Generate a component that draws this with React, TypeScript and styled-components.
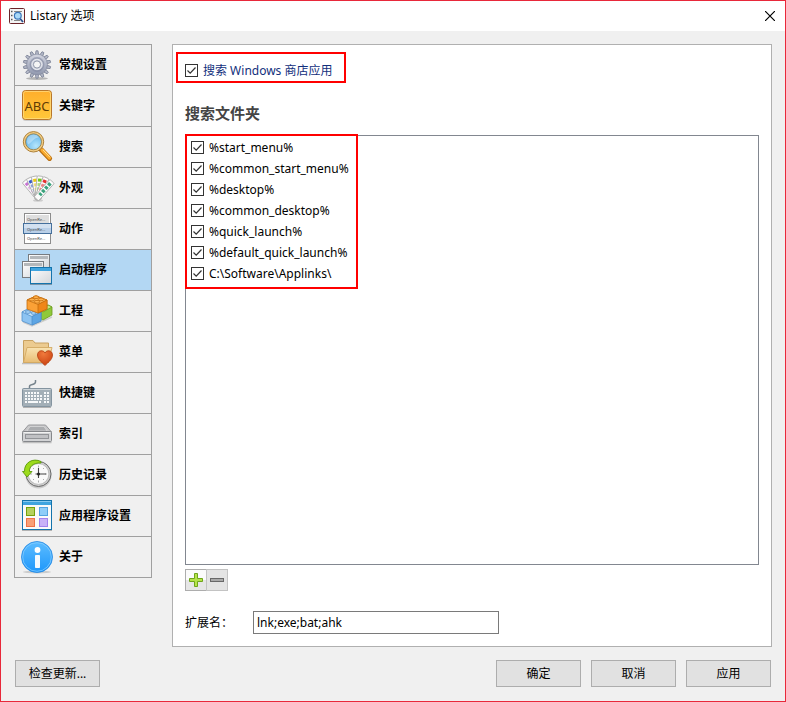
import React, { useState } from 'react';
import styled, { createGlobalStyle } from 'styled-components';

const GlobalStyle = createGlobalStyle`
  *, *::before, *::after { box-sizing: border-box; }
  body {
    margin: 0;
    font: 12px/16px "Noto Sans", "Noto Sans CJK SC", sans-serif;
    color: #000;
  }
  button, input { font: inherit; color: inherit; }
`;

const Window = styled.main`
  display: flex;
  flex-direction: column;
  min-height: 100vh;
  border: 1px solid #e8283a;
  background: #f0f0f0;
`;

const TitleBar = styled.header`
  display: flex;
  align-items: center;
  gap: 5px;
  height: 30px;
  padding: 0 10px 0 8px;
  background: #fff;
`;

const Title = styled.h1`
  flex: 1;
  margin: 0;
  font-size: 12px;
  font-weight: 400;
`;

const CloseButton = styled.button`
  display: flex;
  padding: 0;
  border: 0;
  background: none;
`;

const Body = styled.div`
  flex: 1;
  display: grid;
  grid-template-columns: 138px minmax(0, 1fr);
  gap: 20px;
  padding: 13px 13px 0;
`;

const Nav = styled.nav`
  align-self: start;
  display: flex;
  flex-direction: column;
  gap: 1px;
  padding: 1px;
  background: #a0a0a0;
`;

const NavButton = styled.button<{ $active: boolean }>`
  display: flex;
  align-items: center;
  gap: 6px;
  height: 40px;
  padding: 0 6px;
  border: 0;
  background: ${(p) => (p.$active ? '#b3d7f3' : '#f0f0f0')};
  font-weight: 700;
  text-align: left;
  white-space: nowrap;
`;

const NavIcon = styled.svg`
  flex: none;
  width: 32px;
  height: 32px;
  overflow: visible;
  font-weight: 400;
`;

const Panel = styled.section`
  display: flex;
  flex-direction: column;
  padding: 7px 12px 12px;
  border: 1px solid #b0b0b0;
  background: #fff;
`;

const MarkedOption = styled.div`
  align-self: flex-start;
  display: flex;
  align-items: flex-end;
  width: 170px;
  height: 31px;
  margin-left: -9px;
  padding: 0 7px;
  border: 2px solid #f00;
  color: #12307c;
`;

const CheckLabel = styled.label`
  display: flex;
  align-items: center;
  gap: 5px;
  height: 21px;
  white-space: nowrap;
`;

const CheckFrame = styled.span`
  display: grid;
  flex: none;
  width: 13px;
  height: 13px;

  & > * { grid-area: 1 / 1; }
  & > input:not(:checked) + svg { visibility: hidden; }
  & > svg { pointer-events: none; }
`;

const CheckInput = styled.input`
  appearance: none;
  width: 13px;
  height: 13px;
  margin: 0;
  border: 1px solid #333;
  background: #fff;
`;

const Heading = styled.h2`
  margin: 20px 0 12px;
  font-size: 15px;
  line-height: 20px;
  color: #444;
`;

const FolderList = styled.div`
  flex: 1;
  border: 1px solid #828790;
`;

const MarkedFolders = styled.ul`
  width: 173px;
  margin: -2px 0 0 -1px;
  padding: 1px 4px 3px;
  border: 2px solid #f00;
  list-style: none;
`;

const ListTools = styled.div`
  display: flex;
  margin-top: 4px;
`;

const ToolButton = styled.button<{ $quiet?: boolean }>`
  display: flex;
  align-items: center;
  justify-content: center;
  width: 22px;
  height: 22px;
  padding: 0;
  border: 1px solid ${(p) => (p.$quiet ? '#c3c3c3' : '#adadad')};
  background: ${(p) => (p.$quiet ? '#e4e4e4' : 'linear-gradient(#fbfbfb 48%, #e6e6e6 52%)')};

  & + & { margin-left: -1px; }
`;

const Field = styled.div`
  display: flex;
  align-items: center;
  margin-top: 20px;
`;

const FieldLabel = styled.label`
  width: 68px;
`;

const TextInput = styled.input`
  width: 246px;
  height: 23px;
  padding: 0 3px;
  border: 1px solid #7a7a7a;
  background: #fff;
`;

const Footer = styled.footer`
  display: flex;
  gap: 10px;
  padding: 13px 14px 14px;
`;

const PushButton = styled.button`
  width: 85px;
  height: 27px;
  padding: 0;
  border: 1px solid #adadad;
  background: #e1e1e1;

  &:first-child { margin-right: auto; }
`;

const gearTeeth = Array.from({ length: 14 }, (_, i) => (i * 360) / 14);

const GearIcon = () => (
  <NavIcon viewBox="0 0 32 32">
    <defs>
      <linearGradient id="gear" x1="0" y1="0" x2="0" y2="1">
        <stop offset="0" stopColor="#d3d6e1" /><stop offset="1" stopColor="#8f97ad" />
      </linearGradient>
    </defs>
    <ellipse cx="16" cy="29.5" rx="11" ry="1.5" fill="#000" opacity=".25" />
    {gearTeeth.map((angle) => (
      <path
        key={angle}
        d="m14.4 5.500.6-3.700h2l.6 3.700Z"
        transform={`rotate(${angle} 16 15.5)`}
        fill="#b3b8c7"
        stroke="#7b8296"
        strokeWidth=".8"
      />
    ))}
    <circle cx="16" cy="15.5" r="10.4" fill="url(#gear)" stroke="#868da1" strokeWidth=".7" />
    <circle cx="16" cy="15.5" r="6.6" fill="none" stroke="#8289a0" strokeWidth="1.6" opacity=".6" />
    <circle cx="16" cy="15.5" r="5.2" fill="#d7dae3" stroke="#eceef3" strokeWidth=".8" />
    <circle cx="16" cy="15.5" r="3.6" fill="#f5f5f5" stroke="#858ca0" strokeWidth=".9" />
  </NavIcon>
);

const KeywordIcon = () => (
  <NavIcon viewBox="0 0 32 32">
    <defs>
      <linearGradient id="abc" x1="0" y1="0" x2="0" y2="1">
        <stop offset="0" stopColor="#ffae2b" /><stop offset="1" stopColor="#ffc83a" />
      </linearGradient>
    </defs>
    <rect x="1.5" y="1" width="29" height="30" rx="3" fill="#000" opacity=".15" />
    <rect x="1.5" y=".5" width="29" height="29" rx="3" fill="url(#abc)" stroke="#b8772a" />
    <rect x="2.5" y="1.5" width="27" height="27" rx="2" fill="none" stroke="#ffe08a" strokeWidth=".7" />
    <text x="16" y="21" textAnchor="middle" fontSize="13" fill="#5e3a04">ABC</text>
  </NavIcon>
);

const SearchIcon = () => (
  <NavIcon viewBox="0 0 32 32">
    <defs>
      <radialGradient id="lens" cx=".65" cy=".75" r=".8">
        <stop offset="0" stopColor="#b5e6fc" /><stop offset="1" stopColor="#58aee8" />
      </radialGradient>
    </defs>
    <path d="M20 18.5 28.6 27.4" stroke="#b86f13" strokeWidth="5" strokeLinecap="round" />
    <path d="M21.2 19 28.4 26.9" stroke="#f9aa2e" strokeWidth="3.4" strokeLinecap="round" />
    <path d="m22.3 19.2 6.4 6.7" stroke="#ffe29a" strokeWidth="1" strokeLinecap="round" />
    <circle cx="12.5" cy="10.8" r="10.2" fill="#f4ce85" stroke="#ad8038" strokeWidth="1" />
    <circle cx="12.5" cy="10.8" r="8" fill="url(#lens)" stroke="#92773f" strokeWidth=".8" />
    <path d="M6 10a6.5 6.5 0 0 1 12-3.5C14 6 11 11 7.2 13.5A7 7 0 0 1 6 10Z" fill="#fff" opacity=".35" />
  </NavIcon>
);

const swatches = [
  { angle: -40, color: '#c772d4', fade: 0.5 },
  { angle: -25, color: '#3558cc', fade: 0.6 },
  { angle: -10, color: '#ecc812', fade: 0.6 },
  { angle: 6, color: '#74c41c', fade: 0.6 },
  { angle: 23, color: '#e63030', fade: 0.6 },
  { angle: 42, color: '#3aa27c', fade: 1 },
];

const AppearanceIcon = () => (
  <NavIcon viewBox="0 0 32 32">
    <ellipse cx="17" cy="28.5" rx="5" ry="1.2" fill="#000" opacity=".15" />
    {swatches.map(({ angle, color, fade }) => (
      <g key={angle} transform={`rotate(${angle} 17 25)`}>
        <rect x="14" y="4" width="6" height="23.5" rx="1" fill="#fcfcfc" stroke="#a8a8a8" strokeWidth=".8" />
        <rect x="15.2" y="6.5" width="3.6" height="3" fill={color} />
        <rect x="15.2" y="11" width="3.6" height="3" fill={color} opacity={fade} />
        <rect x="15.2" y="15.500" width="3.6" height="3" fill={color} opacity={fade} />
        <rect x="15.2" y="20" width="3.6" height="2.5" fill={color} opacity={fade} />
      </g>
    ))}
  </NavIcon>
);

const ActionIcon = () => (
  <NavIcon viewBox="0 0 32 32">
    <rect x="3.5" y=".5" width="26" height="30" fill="#fff" stroke="#8c8c8c" />
    <rect x="5" y="2" width="23" height="8" fill="#dedede" />
    <rect x="2.5" y="10.5" width="28" height="10" fill="#bad0e8" stroke="#45709d" />
    <rect x="3" y="11" width="27" height="4" fill="#d3e1f0" />
    <g fontSize="4" fill="#444">
      <text x="6" y="7.5">OpenRe...</text>
      <text x="6" y="17.5">OpenRe...</text>
      <text x="6" y="26.5">OpenRe...</text>
    </g>
  </NavIcon>
);

const LauncherIcon = () => (
  <NavIcon viewBox="0 0 32 32">
    <defs>
      <linearGradient id="pane" x1="0" y1="0" x2="1" y2="1">
        <stop offset="0" stopColor="#fff" /><stop offset="1" stopColor="#d2d6da" />
      </linearGradient>
    </defs>
    <rect x="7.5" y=".5" width="21" height="16" fill="url(#pane)" stroke="#777b7f" />
    <rect x="9" y="2" width="18" height="3" fill="#b4b8bb" />
    <rect x="1.5" y="7.5" width="21" height="16" fill="url(#pane)" stroke="#777b7f" />
    <rect x="3" y="9" width="18" height="3" fill="#b4b8bb" />
    <rect x="9.5" y="13.5" width="21" height="16" fill="url(#pane)" stroke="#1474ad" />
    <rect x="10" y="14" width="20" height="3" fill="#3fa4df" />
    <path d="M9 30.5h22" stroke="#000" opacity=".3" />
  </NavIcon>
);

const ProjectIcon = () => (
  <NavIcon viewBox="0 0 32 32">
    <path d="m2 27 9 4 20-9" fill="none" stroke="#000" strokeWidth="1.5" opacity=".15" />
    <g strokeWidth=".8" strokeLinejoin="round">
      <g stroke="#6a9a1e">
        <path d="m20 14 7-4 4 2v8l-9 5-2-1Z" fill="#8fc93a" />
        <path d="m20 14 7-4 4 2-9 5Z" fill="#c5e982" />
      </g>
      <g stroke="#4f8fcc">
        <path d="m1 17 8-4 11 4v9l-9 4-10-4Z" fill="#8cc3f2" />
        <path d="m1 17 8-4 11 4-9 4.5Z" fill="#cbe6fb" />
        <path d="M11 21.5 20 17v9l-9 4Z" fill="#5da5e4" />
        <ellipse cx="7" cy="17" rx="2.6" ry="1.4" fill="#a9d4f6" />
        <ellipse cx="12.5" cy="18" rx="2.6" ry="1.4" fill="#a9d4f6" />
      </g>
      <g stroke="#c46c0c">
        <path d="m6 5 9-4 11 4v9l-9 4-11-4Z" fill="#fba136" />
        <path d="m6 5 9-4 11 4-9 4.5Z" fill="#fdbd62" />
        <path d="M17 9.5 26 5v9l-9 4Z" fill="#ef8618" />
        <ellipse cx="15" cy="2.2" rx="2.8" ry="1.4" fill="#ffb04a" />
        <ellipse cx="11" cy="4.6" rx="2.8" ry="1.4" fill="#ffb04a" />
        <ellipse cx="20" cy="4.4" rx="2.8" ry="1.4" fill="#ffb04a" />
        <ellipse cx="16" cy="6.8" rx="2.8" ry="1.4" fill="#ffb04a" />
      </g>
    </g>
  </NavIcon>
);

const MenuIcon = () => (
  <NavIcon viewBox="0 0 32 32">
    <defs>
      <linearGradient id="folder" x1="0" y1="0" x2="0" y2="1">
        <stop offset="0" stopColor="#f9e3b2" /><stop offset="1" stopColor="#e8bd74" />
      </linearGradient>
      <radialGradient id="heart" cx=".4" cy=".2" r=".9">
        <stop offset="0" stopColor="#f07a3c" /><stop offset="1" stopColor="#c63c0c" />
      </radialGradient>
    </defs>
    <path d="M1 27.5h24" stroke="#000" strokeWidth="1.5" opacity=".2" />
    <path d="M2.5 26.5v-22H12l2 2.500h13.500v19.500Z" fill="#eccb90" stroke="#c9a262" />
    <path d="M2.5 26.5 6 11.5h25l-3.500 15Z" fill="url(#folder)" stroke="#d3a963" strokeWidth=".9" />
    <path d="M24 29.5c-2.500-3-7.500-5.500-7.500-10.500 0-5 6-5.500 7.500-2 1.500-3.500 7.500-3 7.500 2 0 5-5 7.500-7.500 10.500Z" fill="url(#heart)" stroke="#b33c10" strokeWidth=".8" />
  </NavIcon>
);

const HotkeyIcon = () => (
  <NavIcon viewBox="0 0 32 32">
    <path d="M8.500 11V9.500c0-3 6-1 6-4.500V3" fill="none" stroke="#76838c" strokeWidth="1.5" />
    <path d="M2 30.5h28" stroke="#000" opacity=".25" />
    <rect x="1.5" y="11.5" width="29" height="18" rx="1" fill="#a3afb7" stroke="#8494a0" />
    <path d="M2.500 12.500h27" stroke="#ccd4d9" />
    <g fill="none" stroke="#f7f9fa" strokeWidth="2">
      <path d="M4 16h15M4 19h18M4 22h18" strokeDasharray="2 1" />
      <path d="M23 16h5M23 19h5M23 22h5M23 25h5" strokeDasharray="2 1" />
      <path d="M4 25h2M7 25h10M18 25h2" />
    </g>
  </NavIcon>
);

const IndexIcon = () => (
  <NavIcon viewBox="0 0 32 32">
    <path d="M1.500 24.5h29" stroke="#000" strokeWidth="1.5" opacity=".2" />
    <path d="M7.5 7h17l6 7h-29Z" fill="#c6c6c8" stroke="#97989b" />
    <path d="m9 8.5-3 4.500h20l-3-4.500Z" fill="#aaacaf" stroke="#e2e2e3" strokeWidth=".6" />
    <rect x="1.5" y="13.5" width="29" height="10" rx="1" fill="#d2d3d5" stroke="#85878b" />
    <rect x="4.5" y="16.5" width="23" height="4" fill="#c0c1c4" stroke="#929498" />
    <path d="M3 14.5h26" stroke="#f2f2f2" />
  </NavIcon>
);

const HistoryIcon = () => (
  <NavIcon viewBox="0 0 32 32">
    <circle cx="17.5" cy="16.5" r="13" fill="#000" opacity=".15" />
    <circle cx="17.5" cy="15" r="12.5" fill="#d0d0d0" stroke="#696969" />
    <circle cx="17.5" cy="15" r="10.4" fill="#fafafa" stroke="#aaa" strokeWidth=".7" />
    <path d="M17.5 6.5v2M17.5 21.5v2M9 15h2M24 15h2M12 9l1 1M23 9l-1 1M12 21l1-1M23 21l-1-1" stroke="#999" strokeWidth=".8" />
    <path d="M17.5 9v10M14.500 15H25" fill="none" stroke="#444" strokeWidth="1.1" />
    <circle cx="17.5" cy="15" r="1.500" fill="#222" />
    <path d="M20 2.500C12-1.500 3 3.500 3.500 12.500h-2L6 18l5-5.500H8.500C8 8 12 3.500 20 4Z" fill="#9ddb1c" stroke="#5b9a0b" strokeWidth=".9" strokeLinejoin="round" />
  </NavIcon>
);

const AppSettingsIcon = () => (
  <NavIcon viewBox="0 0 32 32">
    <path d="M1 30.5h30" stroke="#000" opacity=".25" />
    <rect x="1.5" y=".5" width="29" height="29" fill="#fafafa" stroke="#1474ad" />
    <rect x="2" y="1" width="28" height="4" fill="#3fa4df" />
    <path d="M2 1.5h28" stroke="#9ad4f4" strokeWidth=".8" />
    <rect x="5.5" y="7.5" width="8" height="8" fill="#b5d15e" stroke="#76a10c" />
    <rect x="18.5" y="7.5" width="8" height="8" fill="#8fcdf8" stroke="#53a3e0" />
    <rect x="5.5" y="18.5" width="8" height="8" fill="#f8a078" stroke="#ee7347" />
    <rect x="18.5" y="18.5" width="8" height="8" fill="#c9b2f7" stroke="#a182ee" />
  </NavIcon>
);

const AboutIcon = () => (
  <NavIcon viewBox="0 0 32 32">
    <defs>
      <linearGradient id="about" x1="0" y1="0" x2="0" y2="1">
        <stop offset="0" stopColor="#5cbcff" /><stop offset="1" stopColor="#1e97fb" />
      </linearGradient>
    </defs>
    <ellipse cx="16" cy="31" rx="14" ry="1.5" fill="#000" opacity=".15" />
    <circle cx="16" cy="16" r="15.5" fill="url(#about)" stroke="#2388e2" strokeWidth=".8" />
    <circle cx="16" cy="16" r="14.3" fill="none" stroke="#8bd0ff" strokeWidth=".7" />
    <circle cx="16.5" cy="9" r="2.9" fill="#fff" />
    <rect x="14" y="14" width="5" height="13" rx=".8" fill="#f4faff" />
  </NavIcon>
);

const AppIcon = () => (
  <svg width="16" height="16" viewBox="0 0 16 16">
    <rect x=".5" y=".5" width="15" height="15" rx="1" fill="#f4f4f4" stroke="#6b2429" />
    <path d="M2 3.5h1.5M2 7.5h1.5M2 11.5h1.5" stroke="#555" strokeWidth="1.4" />
    <path d="M5 3.5h8M5 12.5h6" stroke="#888" />
    <path d="m11 10.5 3 3.5" stroke="#2b4f8c" strokeWidth="1.8" />
    <circle cx="8.8" cy="7.8" r="3.4" fill="#a9d9f8" stroke="#3b76b9" strokeWidth="1.2" />
  </svg>
);

const categories = [
  { name: '常规设置', Icon: GearIcon },
  { name: '关键字', Icon: KeywordIcon },
  { name: '搜索', Icon: SearchIcon },
  { name: '外观', Icon: AppearanceIcon },
  { name: '动作', Icon: ActionIcon },
  { name: '启动程序', Icon: LauncherIcon },
  { name: '工程', Icon: ProjectIcon },
  { name: '菜单', Icon: MenuIcon },
  { name: '快捷键', Icon: HotkeyIcon },
  { name: '索引', Icon: IndexIcon },
  { name: '历史记录', Icon: HistoryIcon },
  { name: '应用程序设置', Icon: AppSettingsIcon },
  { name: '关于', Icon: AboutIcon },
];

const folders = [
  '%start_menu%',
  '%common_start_menu%',
  '%desktop%',
  '%common_desktop%',
  '%quick_launch%',
  '%default_quick_launch%',
  'C:\\Software\\Applinks\\',
];

const CheckOption = ({ text }: { text: string }) => (
  <CheckLabel>
    <CheckFrame>
      <CheckInput type="checkbox" defaultChecked />
      <svg width="13" height="13" viewBox="0 0 13 13">
        <path d="m2.5 6.5 2.700 2.700 5.300-5.700" fill="none" stroke="#333" strokeWidth="1.2" />
      </svg>
    </CheckFrame>
    {text}
  </CheckLabel>
);

export default function App() {
  const [active, setActive] = useState('启动程序');
  return (
    <Window>
      <GlobalStyle />
      <TitleBar>
        <AppIcon />
        <Title>Listary 选项</Title>
        <CloseButton aria-label="关闭">
          <svg width="10" height="10" viewBox="0 0 10 10">
            <path d="m0 0 10 10M10 0 0 10" stroke="#000" strokeWidth="1.2" />
          </svg>
        </CloseButton>
      </TitleBar>
      <Body>
        <Nav>
          {categories.map(({ name, Icon }) => (
            <NavButton key={name} $active={name === active} onClick={() => setActive(name)}>
              <Icon />
              {name}
            </NavButton>
          ))}
        </Nav>
        <Panel>
          <MarkedOption>
            <CheckOption text="搜索 Windows 商店应用" />
          </MarkedOption>
          <Heading>搜索文件夹</Heading>
          <FolderList>
            <MarkedFolders>
              {folders.map((folder) => (
                <li key={folder}>
                  <CheckOption text={folder} />
                </li>
              ))}
            </MarkedFolders>
          </FolderList>
          <ListTools>
            <ToolButton aria-label="添加">
              <svg width="14" height="14" viewBox="0 0 14 14">
                <path d="M5.5.5h3v5h5v3h-5v5h-3v-5h-5v-3h5Z" fill="#b5e34a" stroke="#6fa51b" />
              </svg>
            </ToolButton>
            <ToolButton $quiet aria-label="删除">
              <svg width="14" height="14" viewBox="0 0 14 14">
                <rect x=".5" y="5.5" width="13" height="3" fill="#aaa" stroke="#696969" />
              </svg>
            </ToolButton>
          </ListTools>
          <Field>
            <FieldLabel htmlFor="extensions">扩展名：</FieldLabel>
            <TextInput id="extensions" type="text" defaultValue="lnk;exe;bat;ahk" />
          </Field>
        </Panel>
      </Body>
      <Footer>
        <PushButton>检查更新...</PushButton>
        <PushButton>确定</PushButton>
        <PushButton>取消</PushButton>
        <PushButton>应用</PushButton>
      </Footer>
    </Window>
  );
}
